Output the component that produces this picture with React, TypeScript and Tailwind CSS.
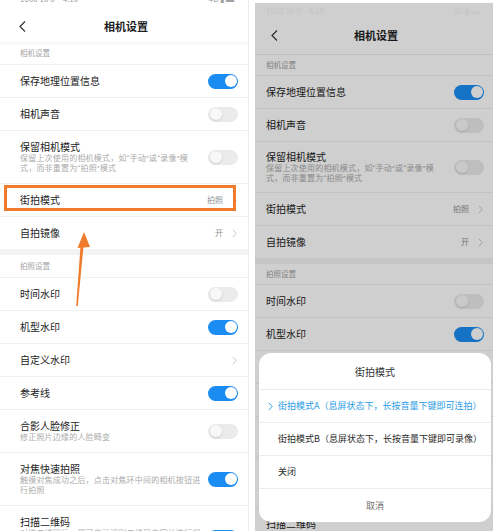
import React from 'react';

type Item = {
  title: string;
  desc?: string;
  toggle?: boolean;
  value?: string;
  chevron?: boolean;
  mark?: boolean;
};

const sections: { label: string; items: Item[] }[] = [
  {
    label: '相机设置',
    items: [
      { title: '保存地理位置信息', toggle: true },
      { title: '相机声音', toggle: false },
      {
        title: '保留相机模式',
        desc: '保留上次使用的相机模式，如“手动”或“录像”模\n式，而非重置为“拍照”模式',
        toggle: false,
      },
      { title: '街拍模式', value: '拍照', chevron: true, mark: true },
      { title: '自拍镜像', value: '开', chevron: true },
    ],
  },
  {
    label: '拍照设置',
    items: [
      { title: '时间水印', toggle: false },
      { title: '机型水印', toggle: true },
      { title: '自定义水印', chevron: true },
      { title: '参考线', toggle: true },
      { title: '合影人脸修正', desc: '修正照片边缘的人脸畸变', toggle: false },
      { title: '对焦快速拍照', desc: '触摸对焦成功之后，点击对焦环中间的相机按钮进\n行拍照', toggle: true },
      { title: '扫描二维码', desc: '对准二维码后，即可自动识别二维码内容并进行相应\n的操作', toggle: true },
    ],
  },
];

const font = { fontFamily: '"Noto Sans CJK SC", "Noto Sans", sans-serif' };
const descFont = { fontFamily: 'Roboto, "Noto Sans CJK SC", sans-serif' };

const Toggle = ({ on }: { on: boolean }) => (
  <div
    className={`w-[30px] h-[15px] rounded-full flex items-center px-[1.5px] shrink-0 ${
      on ? 'bg-[#1b8df2] justify-end' : 'bg-[#ebebeb] justify-start'
    }`}
  >
    <div className={`w-[12px] h-[12px] rounded-full ${on ? 'bg-white' : 'bg-[#f8f8f8] shadow-sm'}`} />
  </div>
);

const Chevron = ({ color = '#c6c6c6' }: { color?: string }) => (
  <svg width="5" height="9" viewBox="0 0 5 9" className="shrink-0">
    <polyline points="0.8,0.8 4.2,4.5 0.8,8.2" fill="none" stroke={color} strokeWidth="1" />
  </svg>
);

const Panel = ({ right }: { right?: boolean }) => {
  const padL = right ? 'pl-[11px]' : 'pl-[20px]';
  const padR = right ? 'pr-[9px]' : 'pr-[10px]';
  return (
    <div className="flex flex-col bg-white">
      {/* status bar, cut off at the top */}
      <div className={`${right ? 'h-[14px]' : 'h-[10px]'} overflow-hidden flex justify-between ${padL} pr-[14px]`}>
        <span className={`text-[8px] ${right ? 'mt-[2px] text-[#f4f4f4]' : '-mt-[7px] text-[#a0a0a0]'}`}>
          1000 10 0　4:10
        </span>
        <span className={`text-[8px] ${right ? 'mt-[2px] text-[#f4f4f4]' : '-mt-[7px] text-[#a0a0a0]'}`}>
          4G ▮ ▬
        </span>
      </div>
      {/* header */}
      <div
        className={`${
          right ? 'h-[38px] border-b border-[#ececec]' : 'h-[32px] shadow-[0_2px_3px_rgba(0,0,0,0.04)]'
        } relative flex items-center justify-center`}
      >
        <svg
          width="7"
          height="11"
          viewBox="0 0 7 11"
          className={`absolute ${right ? 'left-[16px]' : 'left-[19px]'}`}
        >
          <polyline points="6,0.5 1,5.5 6,10.5" fill="none" stroke="#333" strokeWidth="1.2" />
        </svg>
        <span className="text-[11px] font-bold text-[#1e1e1e] ml-[4px]">相机设置</span>
      </div>

      {sections.map((s, si) => (
        <div key={s.label} className="flex flex-col">
          {si > 0 && <div className="h-[6px] bg-[#f3f3f3]" />}
          <div className={`${right ? 'h-[20px]' : 'h-[22px]'} flex items-center ${padL} text-[7.5px] text-[#a3a3a3]`}>
            {s.label}
          </div>
          {s.items.map((it) => (
            <div
              key={it.title}
              className={`relative flex items-center border-t border-[#f1f1f1] ${padL} ${padR} ${
                it.desc ? (right ? 'py-[8px]' : 'py-[9px]') : 'h-[33px]'
              }`}
            >
              <div className="flex-1 flex flex-col min-w-0">
                <span className="text-[10px] leading-[14px] text-[#222]">{it.title}</span>
                {it.desc && (
                  <span
                    className="text-[8px] leading-[10px] text-[#ababab] whitespace-pre-line tracking-[0.2px]"
                    style={descFont}
                  >
                    {it.desc}
                  </span>
                )}
              </div>
              {it.toggle !== undefined && <Toggle on={it.toggle} />}
              {(it.value || it.chevron) && (
                <div className="flex items-center gap-[9px] pr-[1px]">
                  {it.value && <span className="text-[8px] text-[#8f8f8f]">{it.value}</span>}
                  <Chevron />
                </div>
              )}
              {it.mark && !right && (
                <div className="absolute left-[4px] top-[1px] w-[232px] h-[26px] border-[3px] border-[#f07b2b]" />
              )}
            </div>
          ))}
        </div>
      ))}
    </div>
  );
};

const options = [
  { text: '街拍模式A（息屏状态下，长按音量下键即可连拍）', active: true },
  { text: '街拍模式B（息屏状态下，长按音量下键即可录像）', active: false },
  { text: '关闭', active: false },
];

export default function App() {
  return (
    <div className="w-[500px] h-[531px] overflow-hidden bg-white flex" style={font}>
      {/* left screenshot */}
      <div className="relative w-[249px] h-full overflow-hidden border-r border-[#eeeeee]">
        <Panel />
        <svg className="absolute left-0 top-0" width="249" height="531" viewBox="0 0 249 531">
          <polygon points="76.2,306 77.8,306 83.5,246 80.5,246" fill="#f07b2b" />
          <polygon points="84,232 77.5,248 90,247" fill="#f07b2b" />
        </svg>
      </div>

      {/* right screenshot, dimmed under the sheet */}
      <div className="relative ml-[6px] mt-[3px] w-[238px] h-[528px] overflow-hidden">
        <Panel right />
        <div className="absolute inset-0 bg-black/[0.19]" />
        <div className="absolute left-[4px] top-[350px] w-[232px] h-[169px] bg-white rounded-[12px] flex flex-col">
          <div className="h-[36px] flex items-center justify-center text-[10px] text-[#333]">街拍模式</div>
          {options.map((o) => (
            <div key={o.text} className="h-[33px] border-t border-[#ececec] flex items-center pl-[9px] gap-[4px]">
              <span className="w-[6px] flex">{o.active && <Chevron color="#3aa2e8" />}</span>
              <span className={`text-[9px] ${o.active ? 'text-[#2c9de6]' : 'text-[#2a2a2a]'}`}>{o.text}</span>
            </div>
          ))}
          <div className="flex-1 border-t border-[#ececec] flex items-center justify-center text-[9px] text-[#707070]">
            取消
          </div>
        </div>
      </div>
    </div>
  );
}
